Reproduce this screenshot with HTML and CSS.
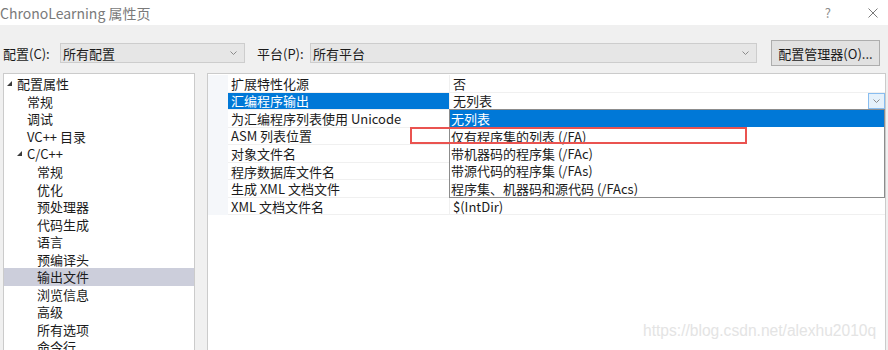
FILE: index.html
```html
<!doctype html>
<html>
	<head>
		<meta charset="utf-8">
		<link rel="stylesheet" href="styles.css">
	</head>
	<body>
		<!-- Barra de título -->
		<div class="titlebar">
			<span class="title">ChronoLearning 属性页</span>
			<span class="help">?</span>
			<svg class="close" width="10" height="10" viewBox="0 0 10 10"><path d="M0.5 0.5 L9.5 9.5 M9.5 0.5 L0.5 9.5"/></svg>
		</div>
		<div class="dialog">
			<!-- Configuración y plataforma -->
			<div class="toolbar">
				<label class="lbl-config">配置(C):</label>
				<div class="combo combo-config">
					<span>所有配置</span>
					<svg class="chev" width="7" height="4" viewBox="0 0 7 4"><path d="M0.5 0.5 L3.5 3.5 L6.5 0.5"/></svg>
				</div>
				<label class="lbl-plat">平台(P):</label>
				<div class="combo combo-plat">
					<span>所有平台</span>
					<svg class="chev" width="7" height="4" viewBox="0 0 7 4"><path d="M0.5 0.5 L3.5 3.5 L6.5 0.5"/></svg>
				</div>
				<button class="btn">配置管理器(O)...</button>
			</div>
			<div class="panes">
				<!-- Árbol de propiedades -->
				<div class="tree">
					<div class="node lv0"><span class="tw"><svg width="5" height="5" viewBox="0 0 5 5"><polygon points="5,0 5,5 0,5"/></svg></span>配置属性</div>
					<div class="node lv1"><span class="tw"></span>常规</div>
					<div class="node lv1"><span class="tw"></span>调试</div>
					<div class="node lv1"><span class="tw"></span>VC++ 目录</div>
					<div class="node lv1"><span class="tw"><svg width="5" height="5" viewBox="0 0 5 5"><polygon points="5,0 5,5 0,5"/></svg></span>C/C++</div>
					<div class="node lv2"><span class="tw"></span>常规</div>
					<div class="node lv2"><span class="tw"></span>优化</div>
					<div class="node lv2"><span class="tw"></span>预处理器</div>
					<div class="node lv2"><span class="tw"></span>代码生成</div>
					<div class="node lv2"><span class="tw"></span>语言</div>
					<div class="node lv2"><span class="tw"></span>预编译头</div>
					<div class="node lv2 sel"><span class="tw"></span>输出文件</div>
					<div class="node lv2"><span class="tw"></span>浏览信息</div>
					<div class="node lv2"><span class="tw"></span>高级</div>
					<div class="node lv2"><span class="tw"></span>所有选项</div>
					<div class="node lv2"><span class="tw"></span>命令行</div>
				</div>
				<!-- Tabla de propiedades -->
				<div class="grid">
					<div class="row"><div class="gut"></div><div class="name">扩展特性化源</div><div class="val">否</div></div>
					<div class="row active"><div class="gut"></div><div class="name">汇编程序输出</div>
						<div class="val edit">
							<span>无列表</span>
							<span class="dd-btn"><svg width="7" height="4" viewBox="0 0 7 4"><path d="M0.5 0.5 L3.5 3.5 L6.5 0.5"/></svg></span>
							<!-- Lista desplegable -->
							<div class="dropdown">
								<div class="opt on">无列表</div>
								<div class="opt">仅有程序集的列表 (/FA)</div>
								<div class="opt">带机器码的程序集 (/FAc)</div>
								<div class="opt">带源代码的程序集 (/FAs)</div>
								<div class="opt">程序集、机器码和源代码 (/FAcs)</div>
							</div>
						</div>
					</div>
					<div class="row"><div class="gut"></div><div class="name">为汇编程序列表使用 Unicode</div><div class="val"></div></div>
					<div class="row"><div class="gut"></div><div class="name">ASM 列表位置</div><div class="val"></div></div>
					<div class="row"><div class="gut"></div><div class="name">对象文件名</div><div class="val"></div></div>
					<div class="row"><div class="gut"></div><div class="name">程序数据库文件名</div><div class="val"></div></div>
					<div class="row"><div class="gut"></div><div class="name">生成 XML 文档文件</div><div class="val"></div></div>
					<div class="row"><div class="gut"></div><div class="name">XML 文档文件名</div><div class="val">$(IntDir)</div></div>
				</div>
			</div>
		</div>
		<!-- Marca roja sobre la opción -->
		<div class="mark"></div>
		<div class="watermark">https://blog.csdn.net/alexhu2010q</div>
	</body>
</html>
```

FILE: styles.css
```css
/* Estilos generales */
* {
	margin: 0px;
	padding: 0px;
	box-sizing: border-box;
}
html, body {
	width: 888px;
	height: 350px;
	overflow: hidden;
}
body {
	position: relative;
	background: #f0f0f0;
	font-family: "Noto Sans CJK SC", sans-serif;
	font-size: 13px;
	color: #1b1b1b;
}
/* Barra de título */
.titlebar {
	height: 25px;
	background: white;
	display: flex;
	align-items: center;
}
.title {
	flex: 1;
	font-size: 14px;
	color: #7a7a7a;
}
.help {
	color: #8c8c8c;
	margin-right: 37px;
}
.close {
	margin-right: 10px;
}
.close path {
	stroke: #7a7a7a;
	stroke-width: 1;
}
/* Fila de configuración */
.dialog {
	padding: 15px 0px 0px 3px;
}
.toolbar {
	height: 26px;
	display: flex;
	align-items: center;
}
.lbl-config {
	width: 57px;
}
.lbl-plat {
	width: 53px;
	margin-left: 12px;
}
.combo {
	height: 20px;
	border: 1px solid #cdcdcd;
	background: #e6e6e6;
	display: flex;
	align-items: center;
	justify-content: space-between;
	padding: 0px 7px 0px 2px;
}
.combo-config {
	width: 185px;
}
.combo-plat {
	width: 447px;
}
.chev path, .dd-btn path {
	fill: none;
	stroke: #8a8a8a;
	stroke-width: 1;
}
.btn {
	width: 109px;
	height: 26px;
	margin-left: 14px;
	border: 1px solid #adadad;
	background: #e1e1e1;
	font: inherit;
	color: inherit;
}
/* Paneles */
.panes {
	display: flex;
	gap: 12px;
	margin-top: 7px;
	height: 290px;
}
.tree {
	width: 192px;
	border: 1px solid #cbcbcb;
	background: white;
	padding-top: 1px;
}
.node {
	height: 17.55px;
	display: flex;
	align-items: center;
	white-space: nowrap;
}
.node.lv0 { padding-left: 3px; }
.node.lv1 { padding-left: 13px; }
.node.lv2 { padding-left: 23px; }
.node.sel {
	background: #cccedb;
}
.tw {
	width: 10px;
	display: flex;
	align-items: center;
}
.tw polygon {
	fill: #3a3a3a;
}
/* Tabla de propiedades */
.grid {
	width: 679px;
	border: 1px solid #cbcbcb;
	background: white;
	padding-top: 1px;
}
.row {
	height: 17.55px;
	display: flex;
}
.gut {
	width: 20px;
	background: #f5f7fa;
}
.name {
	width: 221px;
	padding-left: 3px;
	border-bottom: 1px solid #f0f0f0;
	white-space: nowrap;
	display: flex;
	align-items: center;
}
.val {
	flex: 1;
	padding-left: 3px;
	border-bottom: 1px solid #f0f0f0;
	border-left: 1px solid #f0f0f0;
	display: flex;
	align-items: center;
}
.row.active .name {
	background: #0078d7;
	color: white;
}
.val.edit {
	position: relative;
	border-bottom: 1px solid #d9d9d9;
}
.dd-btn {
	margin-left: auto;
	width: 17px;
	height: 100%;
	border: 1px solid #88bdf0;
	background: #e5f1fb;
	display: flex;
	align-items: center;
	justify-content: center;
}
/* Lista desplegable */
.dropdown {
	position: absolute;
	top: 100%;
	left: -1px;
	right: 0px;
	border: 1px solid #8c8c8c;
	background: white;
	z-index: 2;
}
.opt {
	height: 17.4px;
	padding-left: 1px;
	display: flex;
	align-items: center;
	white-space: nowrap;
}
.opt.on {
	background: #0078d7;
	color: white;
}
/* Marca roja */
.mark {
	position: absolute;
	left: 410px;
	top: 127px;
	width: 337px;
	height: 17px;
	border: 2px solid #ea5350;
	z-index: 3;
}
.watermark {
	position: absolute;
	left: 643px;
	top: 322px;
	font-family: "Liberation Sans", sans-serif;
	font-size: 15.6px;
	color: #e4e4e4;
}
```
